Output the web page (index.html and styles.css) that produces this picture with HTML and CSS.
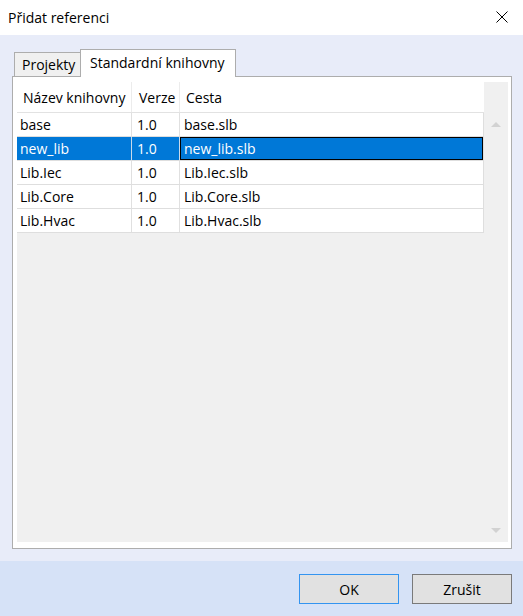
FILE: index.html
```html
<!DOCTYPE html>
<html lang="cs">
<head>
<meta charset="utf-8">
<title>Přidat referenci</title>
<link rel="stylesheet" href="styles.css">
</head>
<body>
<div class="window">
  <div class="titlebar">
    <span class="title">Přidat referenci</span>
    <svg class="close" width="12" height="12" viewBox="0 0 12 12"><path d="M0.5 0.5 L11.5 11.5 M11.5 0.5 L0.5 11.5" stroke="#000" stroke-width="1" fill="none"/></svg>
  </div>
  <div class="content">
    <div class="tabs">
      <div class="tab">Projekty</div>
      <div class="tab active">Standardní knihovny</div>
    </div>
    <div class="panel">
      <div class="grid">
        <div class="rows">
          <div class="row header">
            <div class="cell c1">Název knihovny</div>
            <div class="cell c2">Verze</div>
            <div class="cell c3">Cesta</div>
          </div>
          <div class="row">
            <div class="cell c1">base</div>
            <div class="cell c2">1.0</div>
            <div class="cell c3">base.slb</div>
          </div>
          <div class="row selected">
            <div class="cell c1">new_lib</div>
            <div class="cell c2">1.0</div>
            <div class="cell c3 focus">new_lib.slb</div>
          </div>
          <div class="row">
            <div class="cell c1">Lib.Iec</div>
            <div class="cell c2">1.0</div>
            <div class="cell c3">Lib.Iec.slb</div>
          </div>
          <div class="row">
            <div class="cell c1">Lib.Core</div>
            <div class="cell c2">1.0</div>
            <div class="cell c3">Lib.Core.slb</div>
          </div>
          <div class="row">
            <div class="cell c1">Lib.Hvac</div>
            <div class="cell c2">1.0</div>
            <div class="cell c3">Lib.Hvac.slb</div>
          </div>
        </div>
        <div class="scrollbar">
          <div class="sb-btn"><span class="arrow up"></span></div>
          <div class="sb-track"></div>
          <div class="sb-btn"><span class="arrow down"></span></div>
        </div>
      </div>
    </div>
  </div>
  <div class="footer">
    <button class="btn default">OK</button>
    <button class="btn">Zrušit</button>
  </div>
</div>
</body>
</html>
```

FILE: styles.css
```css
html, body {
  margin: 0;
  padding: 0;
}
body {
  font-family: "Open Sans", "Noto Sans", "Liberation Sans", sans-serif;
  font-size: 14px;
  color: #000;
}
.window {
  width: 523px;
  height: 616px;
  display: flex;
  flex-direction: column;
  background: #e8ecf9;
}
.titlebar {
  height: 35px;
  background: #fff;
  display: flex;
  align-items: center;
  justify-content: space-between;
  padding: 0 15px 0 8px;
  box-sizing: border-box;
}
.title {
  font-size: 14px;
  line-height: 20px;
}
.close {
  display: block;
  margin-top: -1px;
}
.content {
  flex: 1;
  padding: 14px 11px 12px 12px;
  display: flex;
  flex-direction: column;
}
.tabs {
  display: flex;
  align-items: flex-end;
  padding-left: 2px;
  height: 27px;
}
.tab {
  height: 24px;
  box-sizing: border-box;
  border: 1px solid #adadad;
  border-bottom: none;
  border-right: none;
  background: #f0f0f0;
  padding: 0 0 0 7px;
  width: 66px;
  line-height: 24px;
}
.tab.active {
  position: relative;
  z-index: 1;
  height: 28px;
  margin-bottom: -1px;
  width: 156px;
  border-right: 1px solid #adadad;
  background: #fff;
  padding-left: 9px;
  line-height: 25px;
}
.panel {
  flex: 1;
  border: 1px solid #adadad;
  background: #fff;
  padding: 5px 3px 6px 4px;
  display: flex;
}
.grid {
  flex: 1;
  background: #f0f0f0;
  display: flex;
}
.rows {
  width: 467px;
}
.row {
  display: flex;
  height: 24px;
  box-sizing: border-box;
  border-bottom: 1px solid #dedede;
  border-right: 1px solid #dedede;
  background: #fff;
}
.row.header {
  height: 31px;
  border-bottom: 1px solid #e2e2e2;
  border-right: none;
}
.cell {
  box-sizing: border-box;
  border-right: 1px solid #e0e0e0;
  line-height: 23px;
  padding-left: 3px;
  white-space: nowrap;
  overflow: hidden;
}
.header .cell {
  line-height: 28px;
  padding-top: 2px;
  padding-left: 6px;
  border-right-color: #ececec;
}
.header .c3 {
  border-right: none;
}
.c1 { width: 115px; }
.c2 { width: 48px; padding-left: 5px; }
.c3 { flex: 1; border-right: none; padding-left: 4px; }
.header .c2 { padding-left: 7px; }
.header .c3 { padding-left: 6px; }
.row.selected {
  background: #0078d7;
  color: #fff;
}
.row.selected .cell {
  border-right-color: #c9d9ea;
}
.row.selected .focus {
  box-shadow: inset 0 0 0 1px #000;
}
.scrollbar {
  flex: 1;
  display: flex;
  flex-direction: column;
  padding-top: 31px;
}
.sb-btn {
  height: 23px;
  display: flex;
  align-items: center;
  justify-content: center;
}
.sb-track {
  flex: 1;
}
.arrow {
  width: 0;
  height: 0;
  border-left: 5px solid transparent;
  border-right: 5px solid transparent;
}
.arrow.up {
  border-bottom: 5px solid #d2d2d2;
}
.arrow.down {
  border-top: 5px solid #d2d2d2;
}
.footer {
  height: 55px;
  background: #d6e2f7;
  display: flex;
  justify-content: flex-end;
  align-items: flex-start;
  gap: 13px;
  padding: 13px 11px 0 0;
  box-sizing: border-box;
}
.btn {
  width: 100px;
  height: 30px;
  background: #e1e1e1;
  border: 1px solid #7a7a7a;
  font-family: inherit;
  font-size: 14px;
  color: #000;
  padding: 0;
  margin: 0;
}
.btn.default {
  border-color: #3394f0;
}
```
